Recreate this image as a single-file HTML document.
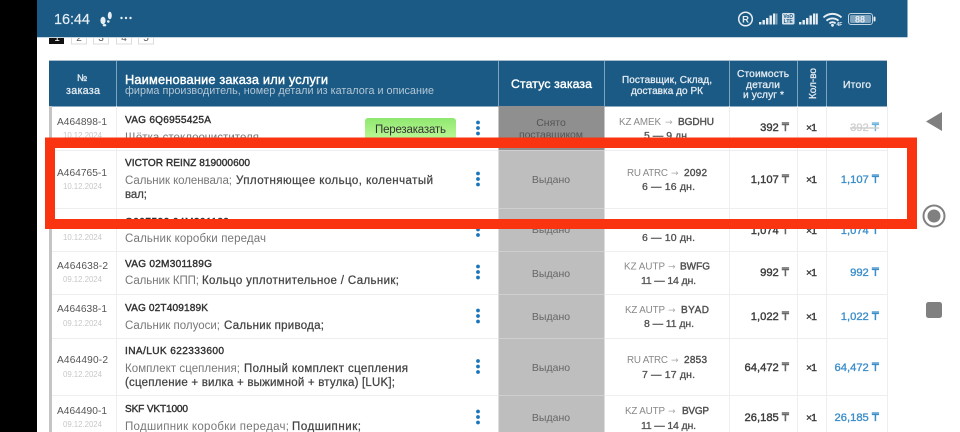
<!DOCTYPE html>
<html lang="ru"><head><meta charset="utf-8"><title>Заказы</title>
<style>
html,body{margin:0;padding:0;width:960px;height:432px;overflow:hidden;background:#fff}
svg{display:block;filter:blur(.35px)}
text{font-family:"Liberation Sans","DejaVu Sans",sans-serif;white-space:pre}
.n{font-size:10.1px;fill:#333;stroke:#333;stroke-width:.4px}
.g{font-size:11.5px;fill:#777}
.b{font-size:11.5px;fill:#444;stroke:#444;stroke-width:.25px}
.o{font-size:10.2px;fill:#555}
.d{font-size:7.9px;fill:#c8c8c8}
.s{font-size:10.5px;fill:#666;text-anchor:middle}
.k{font-size:9.8px;fill:#888}
.c{font-size:10px;fill:#505050;stroke:#505050;stroke-width:.4px}
.t{font-size:10.5px;fill:#505050;stroke:#505050;stroke-width:.3px}
.p{font-size:11.2px;fill:#3c3c3c;stroke:#3c3c3c;stroke-width:.4px}
.x{font-size:10.5px;fill:#3c3c3c;stroke:#3c3c3c;stroke-width:.4px}
.i{font-size:11.2px;fill:#3b8ec9;stroke:#3b8ec9;stroke-width:.35px}
.a{font-size:9px;fill:#aaa;font-family:"DejaVu Sans",sans-serif}
.h{fill:#e2eaf0;stroke:#e2eaf0;stroke-width:.3px}
</style></head><body>
<svg xmlns="http://www.w3.org/2000/svg" width="960" height="432" viewBox="0 0 960 432">
<rect width="960" height="432" fill="#fff"/>
<rect width="37" height="432" fill="#000"/>

<!-- pagination -->
<rect x="49" y="30" width="15" height="14" fill="#111"/>
<g fill="#fff" stroke="#dcdcdc"><rect x="71.500" y="30" width="15" height="14"/><rect x="93.500" y="30" width="15" height="14"/><rect x="116.500" y="30" width="15" height="14"/><rect x="138.500" y="30" width="15" height="14"/></g>
<g font-size="10" fill="#555" text-anchor="middle"><text x="79" y="41">2</text><text x="101" y="41">3</text><text x="124" y="41">4</text><text x="146" y="41">5</text><text x="57" y="41" fill="#fff">1</text></g>

<!-- status bar -->
<rect x="37" width="870.500" height="37" fill="#1b5a85"/>
<rect x="37" y="37" width="870.500" height="1" fill="#c4d3de"/>
<text x="54" y="24" font-size="14.500" fill="#e6eef4" stroke="#e6eef4" stroke-width=".15" textLength="36">16:44</text>
<g fill="#e6eef4"><ellipse cx="103" cy="20.500" rx="2.600" ry="3.700"/><ellipse cx="104.500" cy="25.200" rx="1.800" ry="1.200"/><ellipse cx="109.800" cy="15.500" rx="2" ry="3.800"/><ellipse cx="108.300" cy="21.500" rx="1.300" ry="1.200"/><circle cx="121.500" cy="18" r="1.200"/><circle cx="126" cy="18" r="1.200"/><circle cx="130.500" cy="18" r="1.200"/></g>

<g fill="#e6eef4">
<circle cx="745.500" cy="19" r="6.800" fill="none" stroke="#e6eef4" stroke-width="1.500"/>
<text x="745.500" y="22.500" font-size="9.500" font-weight="700" text-anchor="middle" fill="#e6eef4">R</text>
<rect x="759" y="22" width="2.400" height="2.500"/><rect x="762.500" y="20" width="2.400" height="4.500"/><rect x="766" y="18" width="2.400" height="6.500"/><rect x="769.500" y="15.500" width="2.400" height="9"/><rect x="773" y="13.500" width="2.400" height="11"/><rect x="776" y="13.500" width="1.500" height="11" opacity=".5"/>
<rect x="782" y="13" width="12.500" height="11.500" rx="1.500" fill="#d5e1ea"/>
<text x="788.200" y="18" font-size="5" font-weight="700" text-anchor="middle" fill="#1b5a85">VoD</text>
<text x="788.200" y="23" font-size="5" font-weight="700" text-anchor="middle" fill="#1b5a85">LTE</text>
<rect x="799" y="22" width="2.400" height="2.500"/><rect x="802.500" y="20" width="2.400" height="4.500"/><rect x="806" y="18" width="2.400" height="6.500"/><rect x="809.500" y="15.500" width="2.400" height="9"/><rect x="813" y="13.500" width="2.400" height="11"/><rect x="816" y="13.500" width="1.800" height="11"/>
</g>
<g fill="none" stroke="#e6eef4" stroke-width="1.900"><path d="M823.500 17.500a13 13 0 0 1 18 0"/><path d="M826.500 20.700a9 9 0 0 1 12 0"/><path d="M829.400 23.400a4.500 4.500 0 0 1 6.200 0"/></g>
<circle cx="832.500" cy="25.300" r="1.400" fill="#e6eef4"/>
<text x="836.500" y="26" font-size="5" font-weight="700" fill="#e6eef4">4F</text>
<rect x="848.500" y="13.500" width="24" height="11" rx="2.500" fill="none" stroke="#c4d5e1" stroke-width="1"/>
<rect x="850" y="15" width="21" height="8" rx="1.500" fill="#7fa3bd"/>
<rect x="873.500" y="16.500" width="2" height="5" rx="1" fill="#e6eef4"/>
<text x="860" y="22.500" font-size="9" font-weight="700" text-anchor="middle" fill="#e6eef4">88</text>

<!-- table header -->
<rect x="49" y="60.500" width="838" height="46" fill="#1b5a85"/>
<rect x="49" y="60" width="838" height="1" fill="#a9bdcc"/>
<g fill="#7fa3bd"><rect x="116" y="61" width="1" height="45"/><rect x="498" y="61" width="1" height="45"/><rect x="604" y="61" width="1" height="45"/><rect x="729" y="61" width="1" height="45"/><rect x="797" y="61" width="1" height="45"/><rect x="826" y="61" width="1" height="45"/></g>
<text x="77" y="81" font-size="9.500" class="h" textLength="12">№</text>
<text x="66" y="94" font-size="10.800" class="h" textLength="34">заказа</text>
<text x="125" y="84" font-size="12.800" fill="#fff" stroke="#fff" stroke-width=".4" textLength="203">Наименование заказа или услуги</text>
<text x="125" y="94" font-size="10.800" fill="#b4c7d5" textLength="309">фирма производитель, номер детали из каталога и описание</text>
<text x="511" y="88" font-size="12.300" fill="#fff" stroke="#fff" stroke-width=".4" textLength="81">Статус заказа</text>
<text x="622" y="83" font-size="10" class="h" textLength="90">Поставщик, Склад,</text>
<text x="631" y="94" font-size="10" class="h" textLength="72">доставка до РК</text>
<text x="737" y="77" font-size="10.200" class="h" textLength="52">Стоимость</text>
<text x="746" y="88" font-size="10.200" class="h" textLength="34">детали</text>
<text x="743" y="98" font-size="10.200" class="h" textLength="41">и услуг *</text>
<text transform="translate(816 99) rotate(-90)" font-size="10" class="h" textLength="31">Кол-во</text>
<text x="843" y="88" font-size="10.400" class="h" textLength="28">Итого</text>

<!-- table body -->
<rect x="49" y="106" width="3" height="326" fill="#c4c4c4"/>
<rect x="498.500" y="106" width="106" height="44" fill="#8f8f8f"/>
<rect x="498.500" y="150" width="106" height="282" fill="#bebebe"/>
<g fill="#eeeeee"><rect x="116" y="106" width="1" height="326"/><rect x="729" y="106" width="1" height="326"/><rect x="797" y="106" width="1" height="326"/><rect x="826" y="106" width="1" height="326"/><rect x="887" y="106" width="1" height="326"/>
<rect x="52" y="150" width="835" height="1"/><rect x="52" y="208" width="835" height="1"/><rect x="52" y="251" width="835" height="1"/><rect x="52" y="294" width="835" height="1"/><rect x="52" y="338" width="835" height="1"/><rect x="52" y="395" width="835" height="1"/></g>
<g fill="#cfcfcf"><rect x="498.500" y="150" width="106" height="1"/><rect x="498.500" y="208" width="106" height="1"/><rect x="498.500" y="251" width="106" height="1"/><rect x="498.500" y="294" width="106" height="1"/><rect x="498.500" y="338" width="106" height="1"/><rect x="498.500" y="395" width="106" height="1"/></g>

<!-- row 1 -->
<text class="o" x="57" y="125" textLength="50">A464898-1</text><text class="d" x="63" y="138" textLength="39">10.12.2024</text>
<text class="n" x="125" y="123" textLength="86">VAG 6Q6955425A</text><text class="g" x="125" y="141" textLength="134">Щётка стеклоочистителя</text>
<defs><linearGradient id="gb" x1="0" y1="0" x2="0" y2="1"><stop offset="0" stop-color="#8fe86f"/><stop offset="1" stop-color="#c5fb9f"/></linearGradient></defs>
<rect x="365" y="118" width="91" height="26" rx="3" fill="url(#gb)"/>
<text x="375" y="133" font-size="11.500" fill="#333" textLength="71">Перезаказать</text>
<g fill="#1b75bb"><circle cx="478" cy="122.500" r="1.900"/><circle cx="478" cy="128" r="1.900"/><circle cx="478" cy="133.500" r="1.900"/></g>
<text x="551" y="126" font-size="10.500" fill="#555" text-anchor="middle">Снято</text><text x="519" y="138" font-size="10.500" fill="#555" textLength="64">поставщиком</text>
<text class="k" x="619" y="125" textLength="42">KZ AMEK</text><text class="a" x="665" y="125">→</text><text class="c" x="678" y="125" textLength="36">BGDHU</text><text class="t" x="644" y="139" textLength="46">5 — 9 дн.</text>
<text class="p" x="789" y="131" text-anchor="end">392 <tspan fill="#666" stroke="#666">₸</tspan></text><text class="x" x="806" y="131" textLength="11">×1</text>
<text x="879" y="131" text-anchor="end" font-size="11.200" fill="#cfcfcf" stroke="#cfcfcf" stroke-width=".3" text-decoration="line-through">392 <tspan fill="#6ab0dc" stroke="#6ab0dc">₸</tspan></text>

<!-- row 2 -->
<text class="o" x="57" y="176" textLength="50">A464765-1</text><text class="d" x="63" y="189" textLength="39">10.12.2024</text>
<text class="n" x="125" y="166" textLength="125">VICTOR REINZ 819000600</text>
<text class="g" x="125" y="184" textLength="107">Сальник коленвала;</text><text class="b" x="236" y="184" textLength="197">Уплотняющее кольцо, коленчатый</text><text class="b" x="125" y="198" textLength="22">вал;</text>
<g fill="#1b75bb"><circle cx="478" cy="173.500" r="1.900"/><circle cx="478" cy="179" r="1.900"/><circle cx="478" cy="184.500" r="1.900"/></g>
<text class="s" x="551" y="183">Выдано</text>
<text class="k" x="627" y="176" textLength="41">RU ATRC</text><text class="a" x="671" y="176">→</text><text class="c" x="684" y="176" textLength="23">2092</text><text class="t" x="642" y="190" textLength="53">6 — 16 дн.</text>
<text class="p" x="789" y="183" text-anchor="end">1,107 <tspan fill="#666" stroke="#666">₸</tspan></text><text class="x" x="806" y="183" textLength="11">×1</text><text class="i" x="879" y="183" text-anchor="end">1,107 ₸</text>

<!-- row 3 -->
<text class="d" x="63" y="240" textLength="39">10.12.2024</text>
<text class="n" x="125" y="225" textLength="104">G097582 04M301189</text><text class="g" x="125" y="242" textLength="141">Сальник коробки передач</text>
<g fill="#1b75bb"><circle cx="478" cy="224" r="1.900"/><circle cx="478" cy="229.500" r="1.900"/><circle cx="478" cy="235" r="1.900"/></g>
<text class="s" x="551" y="233">Выдано</text>
<text class="t" x="642" y="241" textLength="53">6 — 10 дн.</text>
<text class="p" x="789" y="234" text-anchor="end">1,074 <tspan fill="#666" stroke="#666">₸</tspan></text><text class="x" x="806" y="234" textLength="11">×1</text><text class="i" x="879" y="234" text-anchor="end">1,074 ₸</text>

<!-- row 4 -->
<text class="o" x="57" y="269" textLength="51">A464638-2</text><text class="d" x="63" y="282" textLength="39">09.12.2024</text>
<text class="n" x="125" y="267" textLength="87">VAG 02M301189G</text>
<text class="g" x="125" y="284" textLength="74">Сальник КПП;</text><text class="b" x="202" y="284" textLength="197">Кольцо уплотнительное / Сальник;</text>
<g fill="#1b75bb"><circle cx="478" cy="266.500" r="1.900"/><circle cx="478" cy="272" r="1.900"/><circle cx="478" cy="277.500" r="1.900"/></g>
<text class="s" x="551" y="277">Выдано</text>
<text class="k" x="624" y="269.500" textLength="41">KZ AUTP</text><text class="a" x="668" y="269.500">→</text><text class="c" x="680" y="269.500" textLength="30">BWFG</text><text class="t" x="641" y="284" textLength="55">11 — 14 дн.</text>
<text class="p" x="789" y="276" text-anchor="end">992 <tspan fill="#666" stroke="#666">₸</tspan></text><text class="x" x="806" y="276" textLength="11">×1</text><text class="i" x="879" y="276" text-anchor="end">992 ₸</text>

<!-- row 5 -->
<text class="o" x="57" y="312" textLength="50">A464638-1</text><text class="d" x="63" y="326" textLength="39">09.12.2024</text>
<text class="n" x="125" y="311" textLength="83">VAG 02T409189K</text>
<text class="g" x="125" y="329" textLength="95">Сальник полуоси;</text><text class="b" x="224" y="329" textLength="100">Сальник привода;</text>
<g fill="#1b75bb"><circle cx="478" cy="310.500" r="1.900"/><circle cx="478" cy="316" r="1.900"/><circle cx="478" cy="321.500" r="1.900"/></g>
<text class="s" x="551" y="320">Выдано</text>
<text class="k" x="625" y="313" textLength="40">KZ AUTP</text><text class="a" x="668" y="313">→</text><text class="c" x="681" y="313" textLength="28">BYAD</text><text class="t" x="644" y="327" textLength="50">8 — 11 дн.</text>
<text class="p" x="789" y="320" text-anchor="end">1,022 <tspan fill="#666" stroke="#666">₸</tspan></text><text class="x" x="806" y="320" textLength="11">×1</text><text class="i" x="879" y="320" text-anchor="end">1,022 ₸</text>

<!-- row 6 -->
<text class="o" x="57" y="363" textLength="51">A464490-2</text><text class="d" x="63" y="377" textLength="39">09.12.2024</text>
<text class="n" x="125" y="354" textLength="99">INA/LUK 622333600</text>
<text class="g" x="125" y="372" textLength="115">Комплект сцепления;</text><text class="b" x="244" y="372" textLength="164">Полный комплект сцепления</text>
<text class="b" x="125" y="386" textLength="270">(сцепление + вилка + выжимной + втулка) [LUK];</text>
<g fill="#1b75bb"><circle cx="478" cy="361" r="1.900"/><circle cx="478" cy="366.500" r="1.900"/><circle cx="478" cy="372" r="1.900"/></g>
<text class="s" x="551" y="371">Выдано</text>
<text class="k" x="627" y="363" textLength="41">RU ATRC</text><text class="a" x="671" y="363">→</text><text class="c" x="684" y="363" textLength="23">2853</text><text class="t" x="642" y="378" textLength="53">7 — 17 дн.</text>
<text class="p" x="789" y="371" text-anchor="end">64,472 <tspan fill="#666" stroke="#666">₸</tspan></text><text class="x" x="806" y="371" textLength="11">×1</text><text class="i" x="879" y="371" text-anchor="end">64,472 ₸</text>

<!-- row 7 -->
<text class="o" x="57" y="414" textLength="50">A464490-1</text><text class="d" x="63" y="427" textLength="39">09.12.2024</text>
<text class="n" x="125" y="412" textLength="63">SKF VKT1000</text>
<text class="g" x="125" y="430" textLength="164">Подшипник коробки передач;</text><text class="b" x="292" y="430" textLength="69">Подшипник;</text>
<g fill="#1b75bb"><circle cx="478" cy="411.500" r="1.900"/><circle cx="478" cy="417" r="1.900"/><circle cx="478" cy="422.500" r="1.900"/></g>
<text class="s" x="551" y="421">Выдано</text>
<text class="k" x="625" y="414" textLength="40">KZ AUTP</text><text class="a" x="668" y="414">→</text><text class="c" x="682" y="414" textLength="27">BVGP</text><text class="t" x="641" y="429" textLength="55">11 — 14 дн.</text>
<text class="p" x="789" y="421" text-anchor="end">26,185 <tspan fill="#666" stroke="#666">₸</tspan></text><text class="x" x="806" y="421" textLength="11">×1</text><text class="i" x="879" y="421" text-anchor="end">26,185 ₸</text>

<!-- red highlight -->
<path fill="#fa3410" fill-rule="evenodd" d="M45 137.500H917V229H45ZM55 148V219H907V148Z"/>

<!-- side nav -->
<path d="M926 121.500L942 112V131Z" fill="#808080"/>
<circle cx="934" cy="216" r="10.500" fill="none" stroke="#808080" stroke-width="2"/><circle cx="934" cy="216" r="6.500" fill="#808080"/>
<rect x="926" y="302" width="16" height="16" rx="2.500" fill="#808080"/>
</svg>
</body></html>
